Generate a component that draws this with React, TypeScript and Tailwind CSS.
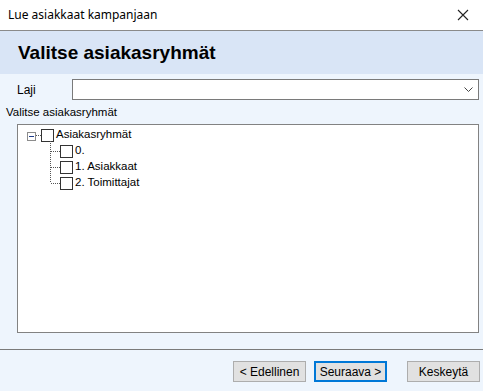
import React from "react";

const groups = ["0.", "1. Asiakkaat", "2. Toimittajat"];

function Box() {
  return <div className="w-[13px] h-[13px] border border-[#333333] bg-white shrink-0" />;
}

export default function App() {
  return (
    <div
      className="w-[483px] h-[391px] bg-[#eef5fd] flex flex-col text-black"
      style={{ fontFamily: '"Liberation Sans", Arial, sans-serif' }}
    >
      {/* Title bar */}
      <div className="h-[30px] bg-white flex items-center justify-between pl-[8px] pr-[10px] shrink-0">
        <span className="text-[12px]" style={{ fontFamily: '"Noto Sans", "Liberation Sans", sans-serif' }}>
          Lue asiakkaat kampanjaan
        </span>
        <svg width="12" height="12" viewBox="0 0 12 12" className="mr-[4px]">
          <path d="M1 1L11 11M11 1L1 11" stroke="#222" strokeWidth="1.1" />
        </svg>
      </div>
      <div className="h-px bg-[#8a8a8a] shrink-0" />

      {/* Header */}
      <div className="h-[43px] bg-[#d9e5f6] flex items-center pl-[18px] shrink-0">
        <h1 className="text-[19px] font-bold leading-none">Valitse asiakasryhmät</h1>
      </div>

      {/* Body */}
      <div className="flex flex-col pt-[5px] shrink-0 h-[275px]">
        <div className="flex items-center h-[21px]">
          <span className="w-[72px] pl-[17px] text-[12px]">Laji</span>
          <div className="w-[407px] h-[21px] border border-[#7a7a7a] bg-white flex items-center justify-end pr-[5px]">
            <svg width="9" height="6" viewBox="0 0 9 6">
              <path d="M0.5 0.5L4.5 4.5L8.5 0.5" stroke="#444" strokeWidth="1" fill="none" />
            </svg>
          </div>
        </div>
        <div className="pl-[6px] mt-[4px] h-[17px] flex items-center text-[11.5px]">Valitse asiakasryhmät</div>

        <div className="ml-[17px] mt-[3px] w-[462px] h-[209px] border border-[#828282] bg-white relative">
          {/* connector lines */}
          <svg className="absolute left-0 top-0" width="60" height="80">
            <rect x="9.5" y="7.5" width="8" height="8" fill="white" stroke="#8c8c8c" />
            <path d="M11 11.5H16" stroke="#1e3c8c" strokeWidth="1" />
            <path d="M18 10.5H23" stroke="#555" strokeDasharray="1 1" />
            <path d="M32.5 16V58" stroke="#555" strokeDasharray="1 1" />
            <path d="M33 26.5H42M33 42.5H42M33 58.5H42" stroke="#555" strokeDasharray="1 1" />
          </svg>
          <div className="flex flex-col pt-[2px] text-[11.5px]">
            <div className="h-[16px] flex items-center pl-[23px] gap-[2px]">
              <Box />
              <span>Asiakasryhmät</span>
            </div>
            {groups.map((g) => (
              <div key={g} className="h-[16px] flex items-center pl-[42px] gap-[2px]">
                <Box />
                <span>{g}</span>
              </div>
            ))}
          </div>
        </div>
      </div>

      <div className="h-px bg-[#7a7a7a] shrink-0" />

      {/* Buttons */}
      <div className="flex-1 flex items-start pt-[11px] pl-[233px] text-[12px]">
        <button className="w-[73px] h-[21px] bg-[#e1e1e1] border border-[#adadad] leading-none">&lt; Edellinen</button>
        <button className="w-[73px] h-[21px] ml-[8px] bg-[#e1e1e1] border-2 border-[#0078d7] leading-none">Seuraava &gt;</button>
        <button className="w-[73px] h-[21px] ml-[20px] bg-[#e1e1e1] border border-[#adadad] leading-none">Keskeytä</button>
      </div>
    </div>
  );
}
